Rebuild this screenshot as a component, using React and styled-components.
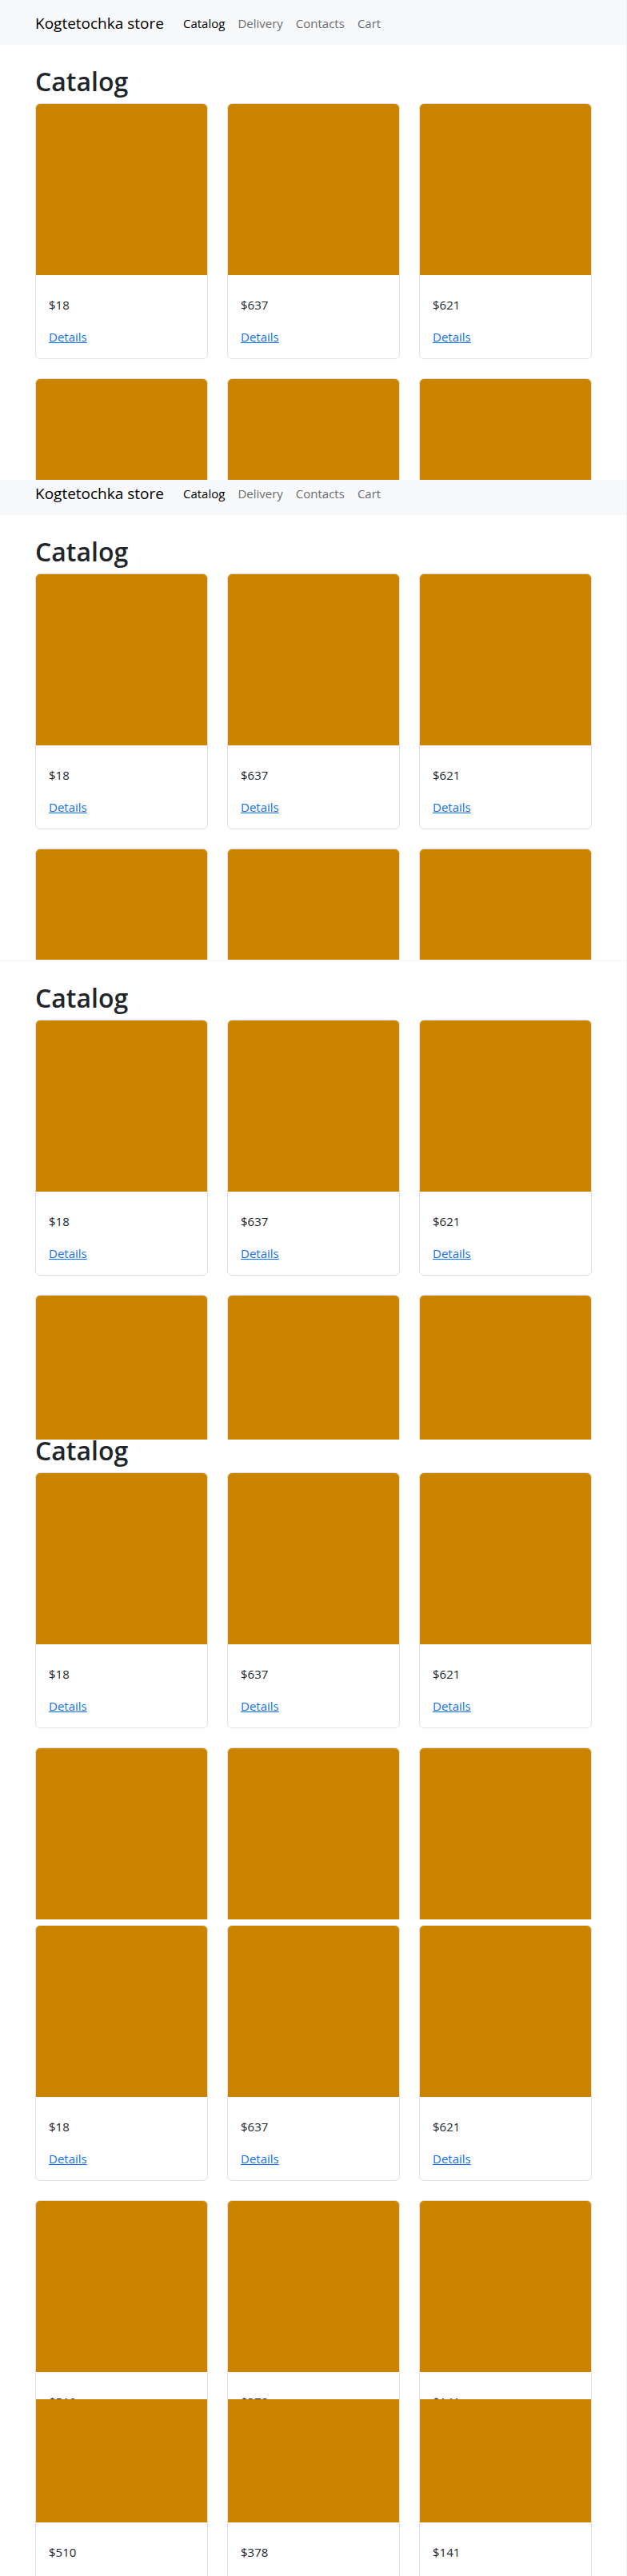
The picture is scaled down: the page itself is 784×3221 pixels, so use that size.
import React from "react";
import styled, { createGlobalStyle } from "styled-components";

const GlobalStyle = createGlobalStyle`
  *, *::before, *::after { box-sizing: border-box; }
  body {
    margin: 0;
    background: #fff;
    color: #212529;
    font-family: "Segoe UI", "Open Sans", "Noto Sans", sans-serif;
    font-size: 15px;
    line-height: 24px;
  }
`;

const Screens = styled.main`
  position: relative;
  display: flex;
  flex-direction: column;

  &::after {
    content: "";
    position: absolute;
    inset: 0 0 0 auto;
    width: 1px;
    background: #f1f1f1;
  }
`;

const Screen = styled.section`
  display: flow-root;
  height: ${(p) => p.$height}px;
  overflow: hidden;
`;

const ScreenContent = styled.div`
  margin-top: ${(p) => p.$start}px;
`;

const Navbar = styled.nav`
  min-height: 56px;
  padding: 9px 0 7px;
  background: #f8f9fa;
`;

const Container = styled.div`
  width: 100%;
  max-width: 720px;
  margin: 0 auto;
  padding: 0 12px;
`;

const NavRow = styled(Container)`
  display: flex;
  align-items: center;
`;

const Brand = styled.a`
  margin-right: 16px;
  font-size: 19px;
  line-height: 30px;
  color: #000;
  text-decoration: none;
`;

const NavLinks = styled.ul`
  display: flex;
  margin: 0;
  padding: 0;
  list-style: none;
`;

const NavLink = styled.a`
  display: block;
  padding: 8px;
  color: ${(p) => (p.$active ? "#000" : "#6b6c6d")};
  text-decoration: none;
`;

const Title = styled.h1`
  margin: 0;
  padding: 26px 0 7px;
  font-size: 32px;
  line-height: 40px;
  font-weight: 600;
`;

const Grid = styled.div`
  display: grid;
  grid-template-columns: repeat(3, 1fr);
  gap: 24px;
`;

const Card = styled.article`
  overflow: hidden;
  border: 1px solid #dfdfdf;
  border-radius: 6px;
  background: #fff;
`;

const Photo = styled.div`
  aspect-ratio: 1;
  background: #cc8400;
`;

const CardBody = styled.div`
  min-height: 104px;
  padding: 25px 16px 15px;
`;

const Price = styled.p`
  margin: 0 0 16px;
`;

const Details = styled.a`
  color: #0d6efd;
  text-decoration: underline;
`;

const links = ["Catalog", "Delivery", "Contacts", "Cart"];
const firstRow = [{ price: 18 }, { price: 637 }, { price: 621 }];
const secondRow = [{ price: 510 }, { price: 378 }, { price: 141 }];

const photos = (row) => row.map((item) => ({ ...item, part: "photo" }));
const prices = (row) => row.map((item) => ({ ...item, part: "price" }));

const firstScreens = [...firstRow, ...photos(secondRow)];

const screens = [
  { start: 0, height: 600, nav: "full", title: true, items: firstScreens },
  { start: -12, height: 600, nav: "full", title: true, items: firstScreens },
  { start: -54, height: 600, nav: "bar", title: true, items: firstScreens },
  { start: -32, height: 600, title: true, items: firstScreens },
  { start: 7, height: 600, items: [...firstRow, ...prices(secondRow)] },
  { start: -61, height: 221, items: prices(secondRow) },
];

function Header({ kind }) {
  return (
    <Navbar>
      {kind === "full" && (
        <NavRow>
          <Brand href="#">Kogtetochka store</Brand>
          <NavLinks>
            {links.map((label) => (
              <li key={label}>
                <NavLink href="#" $active={label === "Catalog"}>{label}</NavLink>
              </li>
            ))}
          </NavLinks>
        </NavRow>
      )}
    </Navbar>
  );
}

function Product({ price, part }) {
  return (
    <Card>
      <Photo />
      <CardBody>
        {part !== "photo" && <Price>${price}</Price>}
        {!part && <Details href="#">Details</Details>}
      </CardBody>
    </Card>
  );
}

function CatalogScreen({ start, height, nav, title, items }) {
  return (
    <Screen $height={height}>
      <ScreenContent $start={start}>
        {nav && <Header kind={nav} />}
        <Container>
          {title && <Title>Catalog</Title>}
          <Grid>
            {items.map((item) => (
              <Product key={item.price} {...item} />
            ))}
          </Grid>
        </Container>
      </ScreenContent>
    </Screen>
  );
}

export default function App() {
  return (
    <>
      <GlobalStyle />
      <Screens>
        {screens.map((screen, index) => (
          <CatalogScreen key={index} {...screen} />
        ))}
      </Screens>
    </>
  );
}
